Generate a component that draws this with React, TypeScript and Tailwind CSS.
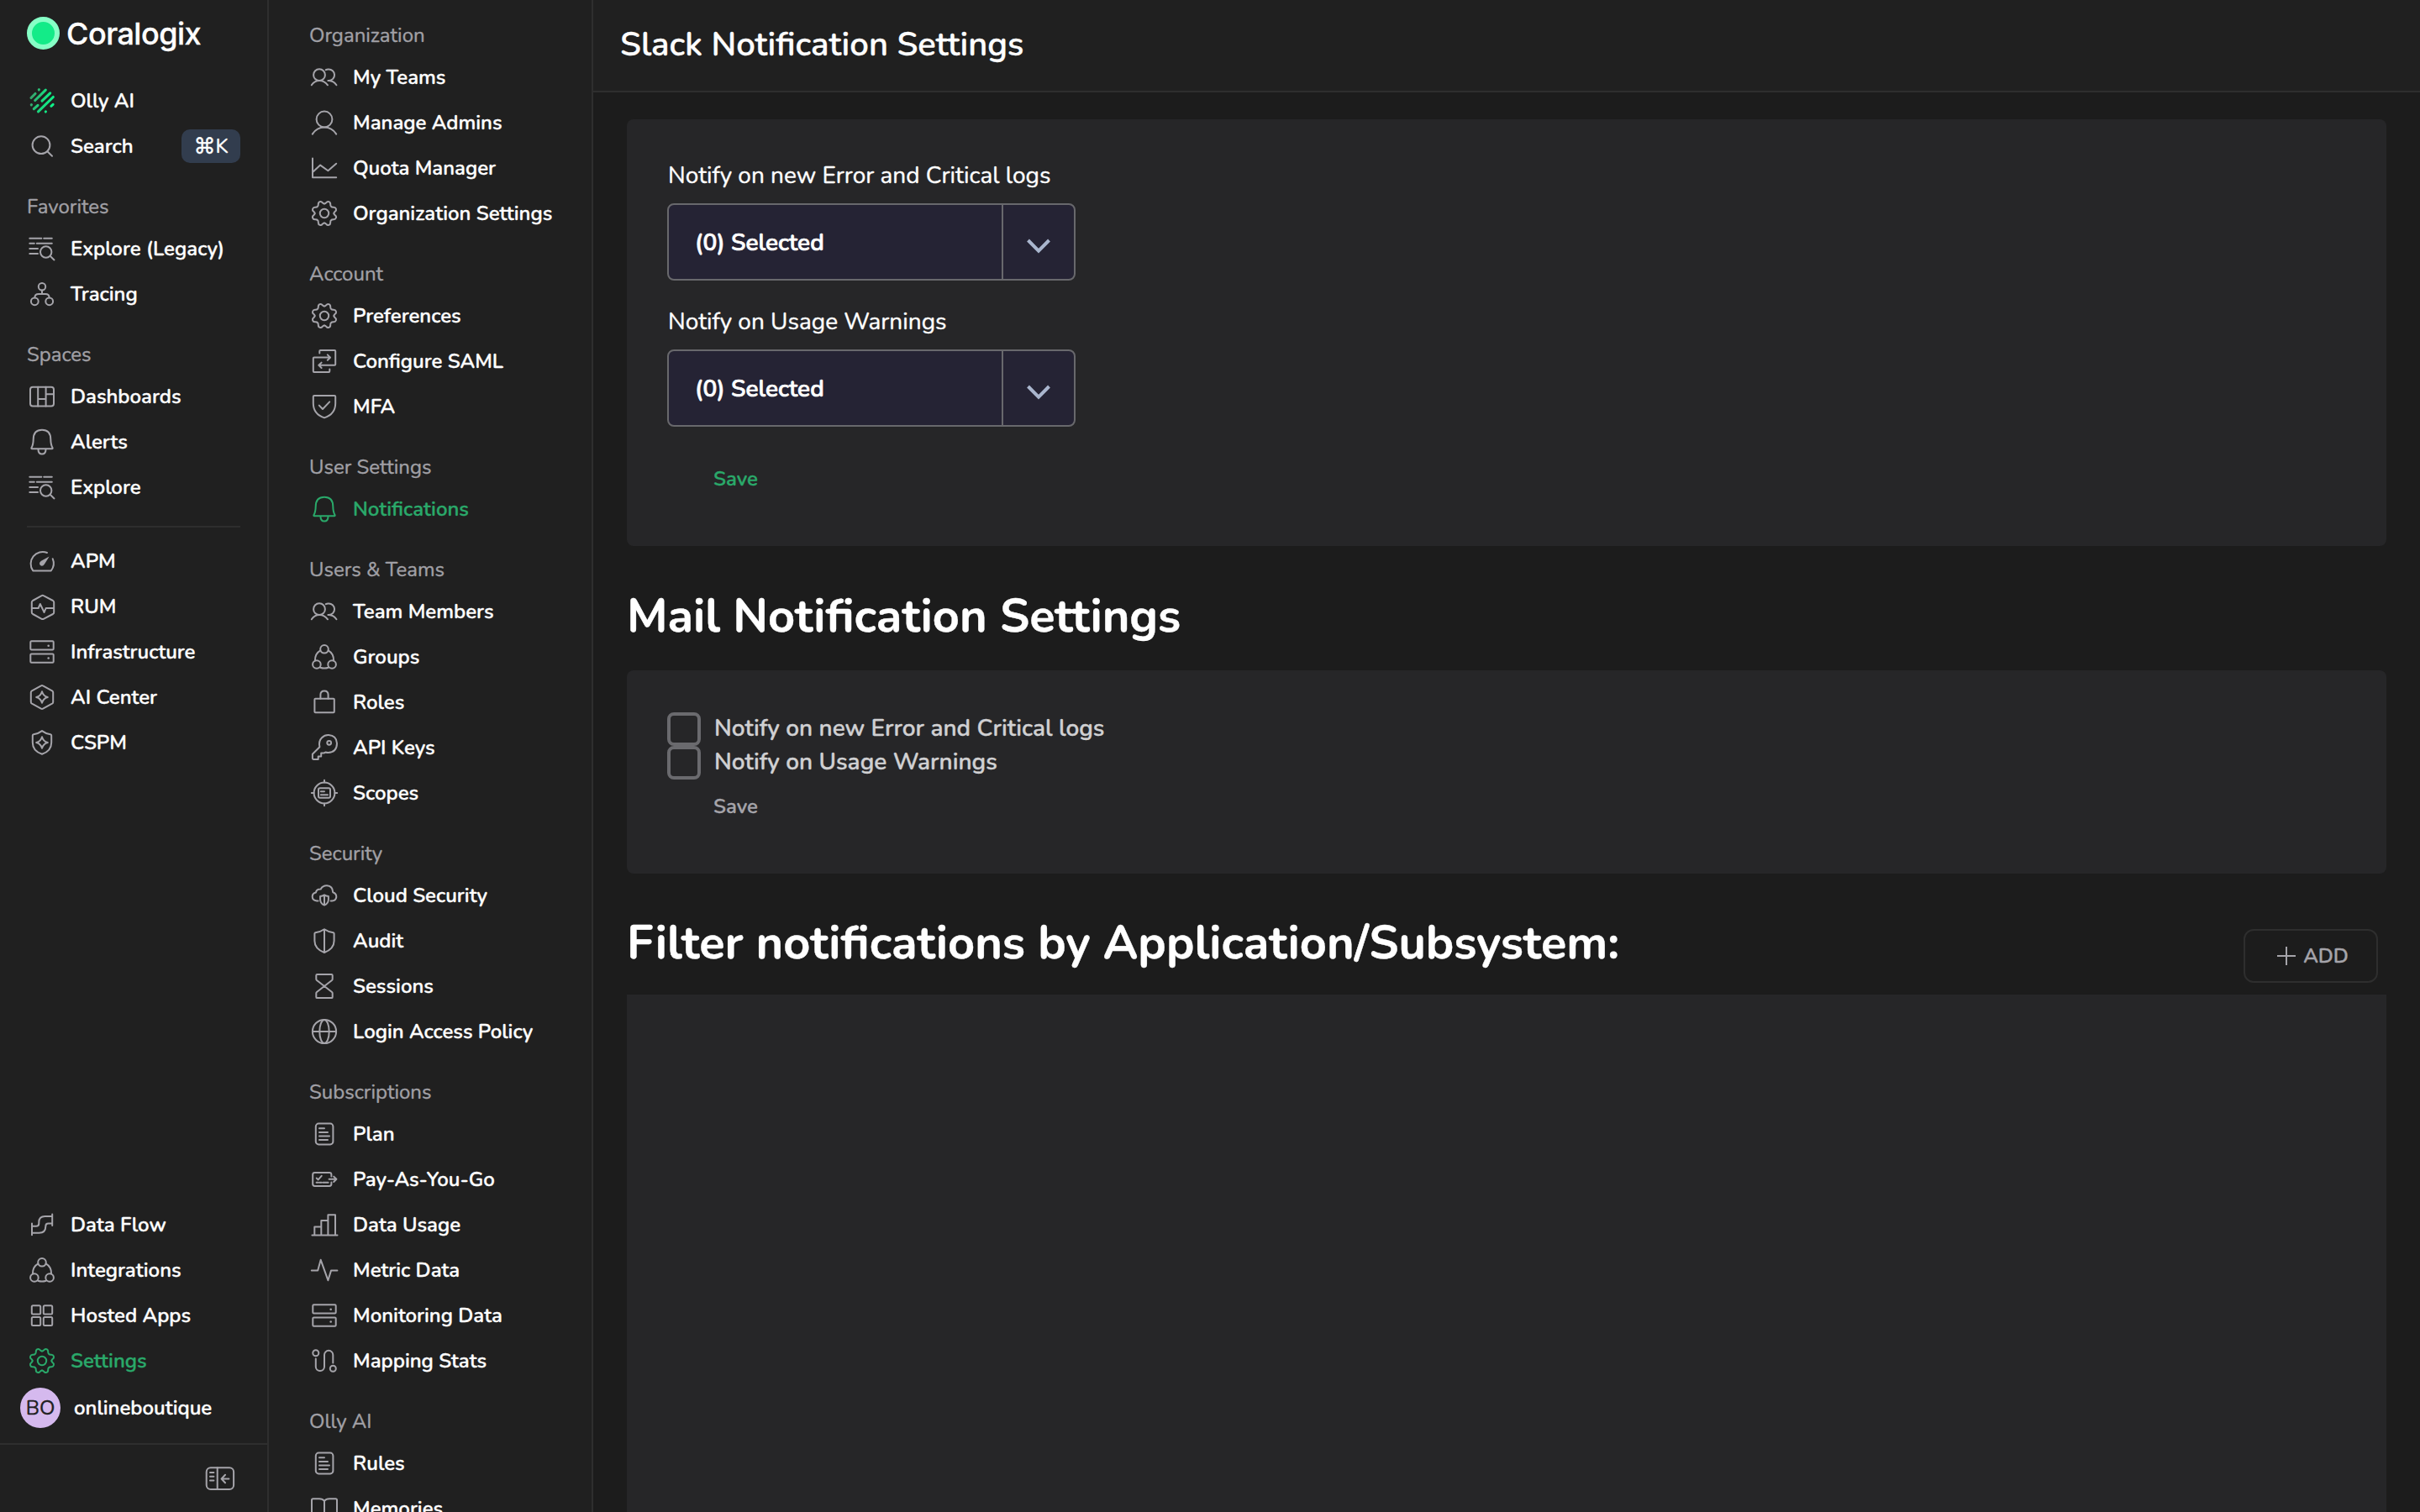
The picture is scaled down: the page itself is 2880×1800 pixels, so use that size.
import type { ReactNode } from "react";

const star = "M16 9.2 Q17.4 14.6 22.8 16 Q17.4 17.4 16 22.8 Q14.6 17.4 9.2 16 Q14.6 14.6 16 9.2 Z";
const gearQuarter =
  "M0 -11.4 Q1.5 -11.4 2.4 -12.9 Q3.5 -14.5 5.3 -13.9 Q7.3 -13.2 7.2 -11 Q7.1 -8.8 8.1 -8.1 Q8.8 -7.1 11 -7.2 Q13.2 -7.3 13.9 -5.3 Q14.5 -3.5 12.9 -2.4 Q11.4 -1.5 11.4 0";

const icons: Record<string, ReactNode> = {
  olly: (
    <>
      <defs>
        <linearGradient id="olly" gradientUnits="userSpaceOnUse" x1="1" y1="10" x2="28" y2="18">
          <stop offset="0" stopColor="#3c9a69" />
          <stop offset="0.55" stopColor="#1bd67d" />
          <stop offset="1" stopColor="#0ff188" />
        </linearGradient>
      </defs>
      <path
        d="M12.3 2.8 l.1 -.1 M3 12.5 L8 7.5 M7.7 15.5 L20.3 3.1 M16 16.2 L25.7 6.8 M11.5 28.9 L29.3 11.5 M3.3 20.8 l.1 -.1 M6.3 25.7 L11 21.3 M26.9 22.3 L29.1 20.3 M20.3 29 l.1 -.1"
        stroke="url(#olly)"
        strokeWidth="3.1"
      />
    </>
  ),
  search: (
    <>
      <circle cx="15" cy="14.7" r="10.4" />
      <path d="M22.4 22.2 L28 27.8" />
    </>
  ),
  explore: (
    <path d="M1.3 3.8 H15.3 M18.2 3.8 H27.8 M1.3 9.8 H6.8 M9.8 9.8 H27.8 M1.3 16 H11 M1.3 22 H11 M27.4 20 A6.7 6.7 0 1 1 14 20 A6.7 6.7 0 1 1 27.4 20 M25.4 24.6 L30.5 29.4" />
  ),
  tracing: (
    <>
      <circle cx="16" cy="7.2" r="4.2" />
      <circle cx="7.3" cy="24.8" r="4.4" />
      <circle cx="24.7" cy="24.8" r="4.4" />
      <path d="M16 11.4 V16 M7.3 20.3 Q7.5 16 12 16 H20 Q24.5 16 24.7 20.3" />
    </>
  ),
  dashboards: (
    <>
      <rect x="2" y="4.8" width="28" height="22.6" rx="3" />
      <path d="M11.2 4.8 V27.4 M20.6 4.8 V27.4 M11.2 19 H20.6 M20.6 13.2 H30" />
    </>
  ),
  bell: (
    <path d="M4 24.2 Q3 24.2 3.5 23 Q5.6 19.5 5.7 13 Q5.8 1.7 16 1.7 Q26.2 1.7 26.3 13 Q26.4 19.5 28.5 23 Q29 24.2 28 24.2 Z M11.4 24.4 Q11.6 30.6 16 30.6 Q20.4 30.6 20.6 24.4" />
  ),
  apm: (
    <>
      <path d="M22 6 A14.2 14.2 0 0 0 5.2 27.4 H26.8 A14.2 14.2 0 0 0 28.7 13.2" />
      <path
        d="M24.6 10.4 L19 19.5 Q16.6 23.2 14 21 Q11.6 18.4 15 15.8 Z"
        className="fill-current stroke-none"
      />
    </>
  ),
  rum: (
    <path d="M16.7 2.8 Q17.2 2.8 17.8 3.2 L29 9 Q30.2 9.7 30.2 11 V23 Q30.2 24.3 29 25 L17.8 30.8 Q16.7 31.4 15.6 30.8 L5 25 Q3.8 24.3 3.8 23 V11 Q3.8 9.7 5 9 L15.6 3.2 Q16.2 2.8 16.7 2.8 Z M3.8 18 H11.7 L13.8 13 L18.6 23 L20.6 18 H30.2" />
  ),
  server: (
    <>
      <rect x="2.3" y="3.2" width="27.4" height="10.3" rx="1.2" />
      <rect x="2.3" y="18.4" width="27.4" height="10.3" rx="1.2" />
      <circle cx="23.7" cy="8.7" r="1.3" className="fill-current stroke-none" />
      <circle cx="23.7" cy="23.5" r="1.3" className="fill-current stroke-none" />
    </>
  ),
  aiCenter: (
    <path
      d={
        "M16 1.9 Q16.5 1.9 17.1 2.3 L28 8.3 Q29.2 9 29.2 10.3 V21.7 Q29.2 23 28 23.7 L17.1 29.7 Q16 30.3 14.9 29.7 L4 23.7 Q2.8 23 2.8 21.7 V10.3 Q2.8 9 4 8.3 L14.9 2.3 Q15.5 1.9 16 1.9 Z " +
        star
      }
    />
  ),
  cspm: (
    <path
      d={
        "M16 2.1 Q20.5 5.5 26 6.2 Q27.2 6.4 27.2 7.6 V16 Q27.2 26 16 29.8 Q4.8 26 4.8 16 V7.6 Q4.8 6.4 6 6.2 Q11.5 5.5 16 2.1 Z " +
        star
      }
    />
  ),
  dataFlow: (
    <path d="M4 14.6 V28.2 M28.2 3.4 V17 M4 17.8 H9 Q12.3 17.8 12.3 14.5 V13 Q12.3 5.9 19.5 5.9 H28.2 M4 25.7 H12.5 Q20.3 25.7 20.3 18 Q20.3 14.6 23.5 14.6 H28.2" />
  ),
  integrations: (
    <>
      <circle cx="16" cy="6.8" r="4.8" />
      <circle cx="6.9" cy="25" r="4.8" />
      <circle cx="25.1" cy="25" r="4.8" />
      <path d="M11.3 8.4 Q4.9 12 4.9 20.4 M20.7 8.4 Q27.1 12 27.1 20.4 M11.3 28.7 Q16 30.3 20.7 28.7" />
    </>
  ),
  apps: (
    <>
      <rect x="3.8" y="4.2" width="10.4" height="10.2" rx="1.5" />
      <rect x="17.8" y="4.2" width="10.4" height="10.2" rx="1.5" />
      <rect x="3.8" y="17.9" width="10.4" height="10.2" rx="1.5" />
      <rect x="17.8" y="17.9" width="10.4" height="10.2" rx="1.5" />
    </>
  ),
  gear: (
    <>
      <g transform="translate(16 16)">
        <path d={gearQuarter} />
        <path d={gearQuarter} transform="rotate(90)" />
        <path d={gearQuarter} transform="rotate(180)" />
        <path d={gearQuarter} transform="rotate(270)" />
      </g>
      <circle cx="16" cy="16" r="5.2" />
    </>
  ),
  teams: (
    <>
      <circle cx="10" cy="13.2" r="6.9" />
      <path d="M.8 25.3 Q4.2 20.1 10.2 20.1 Q16 20.1 20 25.3 M17.8 7.2 Q19.2 6.3 21 6.4 A6.8 6.8 0 0 1 21.5 20 Q27 20.3 30.4 25.3 M20.4 20 H21.6" />
    </>
  ),
  user: (
    <>
      <circle cx="16" cy="12" r="9.4" />
      <path d="M1.8 29.6 Q7 21.5 16 21.5 Q25 21.5 30.2 29.6" />
    </>
  ),
  chart: <path d="M2 4.4 V27.3 H30.2 M2.3 20.8 L11.2 12.6 L20.4 19.3 L30.2 10.7" />,
  swap: (
    <path d="M10.3 6.4 V4 Q10.3 3 11.3 3 H28.2 Q29.2 3 29.2 4 V19.8 Q29.2 20.8 28.2 20.8 H9.4 M12.6 17.6 L9.3 20.8 L12.6 24 M22.3 25.6 V28 Q22.3 29 21.3 29 H3.8 Q2.8 29 2.8 28 V12.6 Q2.8 11.6 3.8 11.6 H23 M19.8 8.4 L23.1 11.6 L19.8 14.8" />
  ),
  shieldCheck: (
    <path d="M4 2.9 H28 Q29.2 2.9 29.2 4.1 V12 Q29.2 25 16 29.4 Q2.8 25 2.8 12 V4.1 Q2.8 2.9 4 2.9 Z M9.8 14.6 L14 19 L22.2 10.4" />
  ),
  lock: (
    <>
      <rect x="4.4" y="11.7" width="23.4" height="16.5" rx="1" />
      <path d="M11.4 11.7 V7 Q11.4 2.4 16 2.4 Q20.6 2.4 20.6 7 V11.7" />
    </>
  ),
  key: (
    <>
      <path d="M10.4 15.2 Q8.9 8.2 13 4.2 Q16.5 .9 21 1.1 Q30.6 1.8 31 11 Q30.8 21.7 20.5 22 Q19 22 17.4 21.5 Q16.3 22.6 15 22.6 H12.2 V26.4 H8.7 V29.9 H3 Q1.9 29.9 1.9 28.8 V23.7 Z" />
      <circle cx="21.7" cy="10.3" r="2.4" />
    </>
  ),
  scopes: (
    <>
      <circle cx="16" cy="16" r="12.4" />
      <rect x="9" y="10.2" width="14" height="11.6" rx="1.8" />
      <path d="M16 .8 V3.6 M16 28.4 V31.2 M.8 16 H3.6 M28.4 16 H31.2 M11.8 14.2 H16 M11.8 18.3 H20" />
    </>
  ),
  cloud: (
    <>
      <path d="M8.6 22.6 H7 Q1.7 21.8 1.7 17.3 Q1.8 13.5 5.9 12.6 Q6.5 8.2 11.7 8.4 Q14 4.2 19 4.3 Q26 4.8 26.2 12.2 Q30.4 13.5 30.3 17.8 Q29.8 22 25 22.6 H23.6" />
      <path d="M16 15.4 Q18 16.8 20.9 17 V20.5 Q20.9 25.7 16 27.6 Q11.1 25.7 11.1 20.5 V17 Q14 16.8 16 15.4 Z M16 16 V27" />
    </>
  ),
  shield: (
    <path d="M16 2.3 Q20 5.2 26.6 6.2 Q27.6 6.4 27.6 7.4 V16 Q27.6 25.5 16 30 Q4.4 25.5 4.4 16 V7.4 Q4.4 6.4 5.4 6.2 Q12 5.2 16 2.3 Z M16 2.3 V30" />
  ),
  hourglass: (
    <path d="M7.5 2 H24.5 Q25.7 2 25.7 3.2 V7.6 Q25.7 8.4 25 9 L16 16 L7 9 Q6.3 8.4 6.3 7.6 V3.2 Q6.3 2 7.5 2 Z M7.5 30.1 H24.5 Q25.7 30.1 25.7 28.9 V24.4 Q25.7 23.6 25 23 L16 16 L7 23 Q6.3 23.6 6.3 24.4 V28.9 Q6.3 30.1 7.5 30.1 Z" />
  ),
  globe: (
    <>
      <circle cx="16" cy="16" r="14.1" />
      <ellipse cx="16" cy="16" rx="5.7" ry="14.1" />
      <path d="M1.9 16 H30.1" />
    </>
  ),
  doc: (
    <>
      <rect x="5.8" y="3.6" width="20.6" height="24.8" rx="3.4" />
      <path d="M10 9.3 H16 M10 14 H20 M10 18.6 H22 M10 23.1 H20" />
    </>
  ),
  payg: (
    <>
      <path d="M24.4 12.6 V10.4 Q24.4 8 22 8 H4.6 Q2.2 8 2.2 10.4 V21.6 Q2.2 24 4.6 24 H22 Q24.4 24 24.4 21.6 V19.4" />
      <path d="M21.6 15.8 H30.2 M27.2 12.6 L30.4 15.8 L27.2 19 M6.7 14.6 L8.7 16.4 L12.7 11.8 M6.6 19.7 H8.6 M10.3 19.7 H12.6 M14.4 19.7 H20.6" />
    </>
  ),
  bars: (
    <path d="M1.4 28.6 H31.5 M4.3 28.6 V18.4 H12.3 M12.3 28.6 V11 H20.4 M20.4 28.6 V4.3 H29 V28.6" />
  ),
  pulse: <path d="M.8 16.6 H8.2 L11.7 3.8 L20.4 28.2 L24 16.6 H31.4" />,
  route: (
    <>
      <circle cx="5.8" cy="6.7" r="3.5" />
      <circle cx="26.3" cy="25.3" r="3.5" />
      <path d="M5.8 13.6 V23 A5.1 5.1 0 0 0 16 23 V9 A5.1 5.1 0 0 1 26.3 9 V18.4" />
    </>
  ),
  book: (
    <path d="M16 7 Q14 4.2 10 4.2 H2.6 Q1 4.2 1 5.8 V27 H12 Q16 27 16 30 Q16 27 20 27 H31 V5.8 Q31 4.2 29.4 4.2 H22 Q18 4.2 16 7 Z M16 7 V30" />
  ),
};

function Icon({ name }: { name: string }) {
  return (
    <svg
      viewBox="0 0 32 32"
      className="size-8 shrink-0 overflow-visible fill-none stroke-current"
      strokeWidth="2"
      strokeLinecap="round"
      strokeLinejoin="round"
    >
      {icons[name]}
    </svg>
  );
}

function NavItem({ icon, label, active, children }: { icon: string; label: string; active?: boolean; children?: ReactNode }) {
  return (
    <a className={`flex h-[54px] items-center text-2xl font-semibold ${active ? "text-[#2aa96a]" : "text-white"}`}>
      <span className={`flex ${active ? "" : "text-[#a5a4aa]"}`}>
        <Icon name={icon} />
      </span>
      <span className="ml-[18px] whitespace-nowrap">{label}</span>
      {children}
    </a>
  );
}

function NavHeading({ label }: { label: string }) {
  return <h3 className="flex h-[46px] items-center text-2xl text-[#a1a0a6]">{label}</h3>;
}

const settings = [
  {
    title: "Organization",
    items: [
      ["teams", "My Teams"],
      ["user", "Manage Admins"],
      ["chart", "Quota Manager"],
      ["gear", "Organization Settings"],
    ],
  },
  {
    title: "Account",
    items: [
      ["gear", "Preferences"],
      ["swap", "Configure SAML"],
      ["shieldCheck", "MFA"],
    ],
  },
  { title: "User Settings", items: [["bell", "Notifications"]] },
  {
    title: "Users & Teams",
    items: [
      ["teams", "Team Members"],
      ["integrations", "Groups"],
      ["lock", "Roles"],
      ["key", "API Keys"],
      ["scopes", "Scopes"],
    ],
  },
  {
    title: "Security",
    items: [
      ["cloud", "Cloud Security"],
      ["shield", "Audit"],
      ["hourglass", "Sessions"],
      ["globe", "Login Access Policy"],
    ],
  },
  {
    title: "Subscriptions",
    items: [
      ["doc", "Plan"],
      ["payg", "Pay-As-You-Go"],
      ["bars", "Data Usage"],
      ["pulse", "Metric Data"],
      ["server", "Monitoring Data"],
      ["route", "Mapping Stats"],
    ],
  },
  {
    title: "Olly AI",
    items: [
      ["doc", "Rules"],
      ["book", "Memories"],
    ],
  },
];

function Select() {
  return (
    <div className="flex h-[92px] w-[486px] rounded-lg border-2 border-[#68686c] bg-[#252334]">
      <span className="flex flex-1 items-center pt-0.5 pl-[31px] text-[28px] font-semibold [-webkit-text-stroke:0.7px]">(0) Selected</span>
      <span className="flex w-[86px] items-center justify-center border-l-2 border-[#68686c]">
        <svg viewBox="0 0 28 18" className="mt-2.5 h-[18px] w-7 fill-none stroke-[#aab6ce]" strokeWidth="4">
          <path d="M1.5 2 L14 14.6 L26.5 2" />
        </svg>
      </span>
    </div>
  );
}

function Checkbox({ label }: { label: string }) {
  return (
    <label className="flex h-10 items-center text-[28px] font-semibold text-[#d0d0d2]">
      <span className="size-10 rounded-lg border-4 border-[#6a6a6e]" />
      <span className="mb-[3px] ml-4">{label}</span>
    </label>
  );
}

export default function App() {
  return (
    <div className="flex h-[1800px] w-[2880px] overflow-hidden bg-[#1c1c1c] font-['Nunito','Lato',sans-serif] leading-none text-white [-webkit-text-stroke:0.35px]">
      {/* Main navigation */}
      <aside className="flex w-80 shrink-0 flex-col border-r-2 border-[#2e2e2e] bg-[#202020]">
        <div className="flex h-[93px] items-start pt-5 pl-8">
          <span className="size-[39px] rounded-full border-[6px] border-[#86ffc6] bg-[#13eb88]" />
          <span className="ml-2 font-['Inter',sans-serif] text-[36px] leading-[40px] font-medium tracking-[-0.5px]">Coralogix</span>
        </div>
        <nav className="px-8">
          <div className="pl-0.5">
            <NavItem icon="olly" label="Olly AI" />
            <NavItem icon="search" label="Search">
              <span className="ml-auto flex h-10 w-[70px] items-center justify-center rounded-[10px] bg-[#323d4e] font-normal">
                <span className="font-['DejaVu_Sans',sans-serif] text-[26px]">⌘</span>
                <span>K</span>
              </span>
            </NavItem>
          </div>
          <div className="mt-[22px]">
            <NavHeading label="Favorites" />
            <div className="pl-0.5">
              <NavItem icon="explore" label="Explore (Legacy)" />
              <NavItem icon="tracing" label="Tracing" />
            </div>
          </div>
          <div className="mt-[22px]">
            <NavHeading label="Spaces" />
            <div className="pl-0.5">
              <NavItem icon="dashboards" label="Dashboards" />
              <NavItem icon="bell" label="Alerts" />
              <NavItem icon="explore" label="Explore" />
            </div>
          </div>
          <hr className="mt-[19px] mb-[13px] border-t-2 border-[#2e2e2e]" />
          <div className="pl-0.5">
            <NavItem icon="apm" label="APM" />
            <NavItem icon="rum" label="RUM" />
            <NavItem icon="server" label="Infrastructure" />
            <NavItem icon="aiCenter" label="AI Center" />
            <NavItem icon="cspm" label="CSPM" />
          </div>
        </nav>
        <div className="mt-auto pl-[34px]">
          <NavItem icon="dataFlow" label="Data Flow" />
          <NavItem icon="integrations" label="Integrations" />
          <NavItem icon="apps" label="Hosted Apps" />
          <NavItem icon="gear" label="Settings" active />
        </div>
        <div className="flex h-[71px] items-start pt-[5px] pl-6">
          <span className="flex size-12 items-center justify-center rounded-full bg-[#d5b9ee] text-2xl text-[#202020]">BO</span>
          <span className="ml-4 text-2xl leading-[48px] font-semibold">onlineboutique</span>
        </div>
        <div className="flex h-[82px] justify-end border-t-2 border-[#2e2e2e] pt-[25px] pr-[38px] text-[#a5a4aa]">
          <svg viewBox="0 0 36 30" className="h-[30px] w-9 fill-none stroke-current" strokeWidth="2" strokeLinecap="round" strokeLinejoin="round">
            <rect x="1.7" y="2.2" width="32.4" height="25.8" rx="5" />
            <path d="M14.7 2.2 V28 M6 8 H10.4 M6 12.8 H10.4 M6 17.6 H10.4 M28.4 15.5 H19.8 M24 10.8 L19.6 15.5 L24 20.2" />
          </svg>
        </div>
      </aside>

      {/* Settings navigation */}
      <aside className="w-[386px] shrink-0 border-r-2 border-[#2e2e2e] bg-[#202020] pt-[19px] pl-12">
        {settings.map((group) => (
          <section key={group.title} className="mb-[22px]">
            <NavHeading label={group.title} />
            <div className="pl-0.5">
              {group.items.map(([icon, label]) => (
                <NavItem key={label} icon={icon} label={label} active={label === "Notifications"} />
              ))}
            </div>
          </section>
        ))}
      </aside>

      <main className="flex flex-1 flex-col">
        <header className="flex h-[110px] items-center border-b-2 border-[#2e2e2e] bg-[#202020] pb-0.5 pl-8">
          <h1 className="text-[40px] font-semibold">Slack Notification Settings</h1>
        </header>
        <div className="flex flex-1 flex-col px-10 pt-8">
          <section className="h-[508px] rounded-lg bg-[#262628] pt-11 pl-12">
            <p className="mb-2.5 flex h-[46px] items-center pl-px text-[28px]">Notify on new Error and Critical logs</p>
            <Select />
            <p className="mt-[26px] mb-2.5 flex h-[46px] items-center pl-px text-[28px]">Notify on Usage Warnings</p>
            <Select />
            <button className="mt-[46px] ml-[55px] text-2xl font-semibold text-[#2aa96a]">Save</button>
          </section>

          <h2 className="flex h-[148px] items-center pt-5 text-[55.9px] font-bold">Mail Notification Settings</h2>
          <section className="h-[242px] rounded-lg bg-[#262628] pt-[50px] pl-12">
            <Checkbox label="Notify on new Error and Critical logs" />
            <Checkbox label="Notify on Usage Warnings" />
            <button className="mt-4 ml-[55px] text-2xl font-semibold text-[#a5a4aa]">Save</button>
          </section>

          <div className="flex h-36 items-end justify-between">
            <h2 className="flex h-full items-center pt-[22px] text-[55.9px] font-bold">Filter notifications by Application/Subsystem:</h2>
            <button className="mr-2.5 mb-[14px] flex h-16 w-40 items-center justify-center gap-2 rounded-xl border-2 border-[#2e2e2e] pl-1 text-2xl font-semibold text-[#a5a4aa]">
              <svg viewBox="0 0 24 24" className="size-6 fill-none stroke-current" strokeWidth="2">
                <path d="M12 1 V23 M1 12 H23" />
              </svg>
              ADD
            </button>
          </div>
          <section className="flex-1 bg-[#262628]" />
        </div>
      </main>
    </div>
  );
}
